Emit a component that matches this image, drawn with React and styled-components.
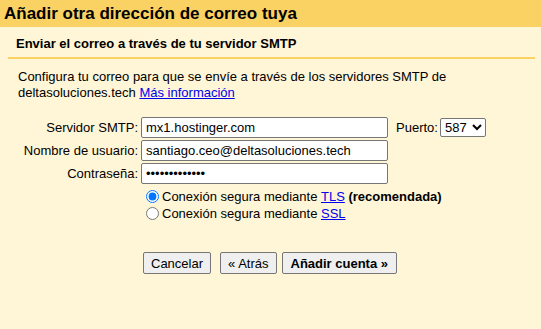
import React from "react";
import styled, { createGlobalStyle } from "styled-components";

const Global = createGlobalStyle`
  html, body { margin: 0; padding: 0; }
  body {
    background: #fff5d7;
    font-family: "Liberation Sans", Arial, sans-serif;
    font-size: 13px;
    color: #000;
  }
`;

const Page = styled.div`
  width: 541px;
  height: 329px;
  background: #fff5d7;
  display: flex;
  flex-direction: column;
`;

const Header = styled.div`
  height: 27px;
  background: #fad163;
  display: flex;
  align-items: center;
  padding-left: 4px;
  font-weight: bold;
  font-size: 17px;
`;

const SubHeader = styled.div`
  margin: 0 6px 0 8px;
  padding: 9px 0 5px 8px;
  border-bottom: 2px solid #fad163;
  font-weight: bold;
  font-size: 13px;
  line-height: 16px;
`;

const Intro = styled.p`
  margin: 10px 10px 0 18px;
  line-height: 16px;
`;

const Link = styled.a`
  color: #0000ee;
  text-decoration: underline;
`;

const Form = styled.div`
  margin-top: 16px;
  display: grid;
  grid-template-columns: 141px auto;
  row-gap: 2px;
  align-items: center;
`;

const Label = styled.label`
  text-align: right;
  padding-right: 3px;
`;

const Field = styled.div`
  display: flex;
  align-items: center;
  gap: 8px;
`;

const Input = styled.input`
  box-sizing: border-box;
  width: 247px;
  height: 21px;
  border: 1px solid #767676;
  border-radius: 2px;
  padding: 1px 4px;
  font-family: "Liberation Sans", Arial, sans-serif;
  font-size: 13px;
  background: #fff;
  color: #000;
`;

const Select = styled.select`
  box-sizing: border-box;
  width: 46px;
  height: 19px;
  font-family: "Liberation Sans", Arial, sans-serif;
  font-size: 13px;
  border: 1px solid #767676;
  border-radius: 2px;
  background: #fff;
  margin-left: -6px;
`;

const Radios = styled.div`
  margin: 4px 0 0 141px;
  display: flex;
  flex-direction: column;
`;

const RadioRow = styled.label`
  display: flex;
  align-items: center;
  height: 17px;
`;

const Radio = styled.input`
  margin: 0 3px 0 5px;
  width: 13px;
  height: 13px;
`;

const Buttons = styled.div`
  margin: 30px 0 0 143px;
  display: flex;
  align-items: center;
`;

const Button = styled.button`
  box-sizing: border-box;
  height: 22px;
  padding: 0 ${(p) => (p.$primary ? 8 : 7)}px;
  margin-right: ${(p) => p.$gap || 0}px;
  font-family: "Liberation Sans", Arial, sans-serif;
  font-size: 13px;
  font-weight: ${(p) => (p.$primary ? "bold" : "normal")};
  background: #efefef;
  border: 1px solid #767676;
  border-radius: 2px;
  color: #000;
`;

export default function App() {
  return (
    <Page>
      <Global />
      <Header>Añadir otra dirección de correo tuya</Header>
      <SubHeader>Enviar el correo a través de tu servidor SMTP</SubHeader>
      <Intro>
        Configura tu correo para que se envíe a través de los servidores SMTP de
        deltasoluciones.tech <Link href="#">Más información</Link>
      </Intro>
      <Form>
        <Label>Servidor SMTP:</Label>
        <Field>
          <Input defaultValue="mx1.hostinger.com" />
          <span>Puerto:</span>
          <Select defaultValue="587">
            <option value="587">587</option>
            <option value="465">465</option>
          </Select>
        </Field>
        <Label>Nombre de usuario:</Label>
        <Field>
          <Input defaultValue="santiago.ceo@deltasoluciones.tech" />
        </Field>
        <Label>Contraseña:</Label>
        <Field>
          <Input type="password" defaultValue="contraseña123" />
        </Field>
      </Form>
      <Radios>
        <RadioRow>
          <Radio type="radio" name="sec" defaultChecked />
          Conexión segura mediante&nbsp;<Link href="#">TLS</Link>&nbsp;<b>(recomendada)</b>
        </RadioRow>
        <RadioRow>
          <Radio type="radio" name="sec" />
          Conexión segura mediante&nbsp;<Link href="#">SSL</Link>
        </RadioRow>
      </Radios>
      <Buttons>
        <Button $gap={9}>Cancelar</Button>
        <Button $gap={5}>« Atrás</Button>
        <Button $primary>Añadir cuenta »</Button>
      </Buttons>
    </Page>
  );
}
